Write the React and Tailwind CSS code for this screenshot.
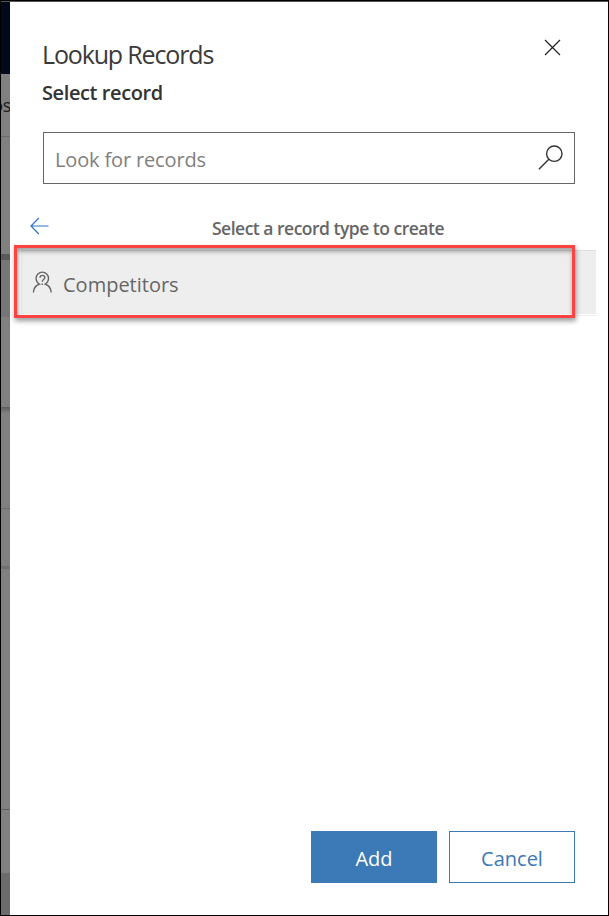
import React from "react";

function PageEdge() {
  return (
    <div className="flex w-[9px] shrink-0 flex-col overflow-hidden bg-[#808080]">
      <div className="h-[72px] shrink-0 bg-[#000a1a]" />
      <div className="flex h-[62px] shrink-0 justify-end">
        <span className="mt-[19px] -mr-[1px] text-[18px] leading-[24px] tracking-[-0.3px] text-[#1c1c1c]">os</span>
      </div>
      <div className="h-px shrink-0 bg-[#6c6c6c]" />
      <div className="h-[117px] shrink-0" />
      <div className="h-[6px] shrink-0 bg-[#5a5a5a]" />
      <div className="h-[57px] shrink-0 bg-[#767676]" />
      <div className="h-[90px] shrink-0" />
      <div className="h-[6px] shrink-0 bg-linear-to-b from-[#5e5e5e] to-[#808080]" />
      <div className="h-[95px] shrink-0" />
      <div className="h-px shrink-0 bg-[#6a6a6a]" />
      <div className="h-[57px] shrink-0" />
      <div className="h-[3px] shrink-0 bg-[#717171]" />
      <div className="h-[240px] shrink-0" />
      <div className="h-px shrink-0 bg-[#606060]" />
      <div className="h-[63px] shrink-0" />
      <div className="flex-1 bg-[#6c6c6c]" />
    </div>
  );
}

export default function App() {
  return (
    <div className="flex h-[916px] w-[609px] flex-col overflow-hidden border border-black bg-white font-['Open_Sans','Noto_Sans',sans-serif]">
      <div className="h-px shrink-0 bg-[#555555]" />
      <div className="flex min-h-0 flex-1">
        <PageEdge />
        <main className="flex min-w-0 flex-1 flex-col">
          <header className="flex h-[130px] shrink-0 justify-between pr-[47px] pl-[32px]">
            <div>
              <h1 className="mt-[35px] text-[25px] leading-[34px] font-normal tracking-[-1.15px] whitespace-nowrap text-[#3a3a3a]">Lookup Records</h1>
              <h2 className="mt-[8px] text-[20px] leading-[28px] font-semibold tracking-[-0.4px] whitespace-nowrap text-[#333333]">Select record</h2>
            </div>
            <button className="mt-[37px] h-[17px] w-[17px]" aria-label="Close">
              <svg width="17" height="17" viewBox="0 0 17 17" fill="none" stroke="#222" strokeWidth="1.2">
                <path d="M1 1L16 16M16 1L1 16" />
              </svg>
            </button>
          </header>

          <div className="ml-[33px] flex h-[52px] w-[532px] shrink-0 items-center justify-between border border-[#666666] pr-[11px] pl-[11px]">
            <span className="pt-[4px] text-[20px] leading-[28px] tracking-[-0.15px] whitespace-nowrap text-[#808080]">Look for records</span>
            <svg className="-mt-px" width="25" height="25" viewBox="0 0 25 25" fill="none" stroke="#333" strokeWidth="1.4">
              <circle cx="16.3" cy="8.7" r="7.7" />
              <path d="M10.9 14.3L.9 24.3" />
            </svg>
          </div>

          <div className="flex h-[66px] shrink-0 pl-[20px]">
            <svg className="mt-[33px] shrink-0" width="19" height="18" viewBox="0 0 19 18" fill="none" stroke="#2f75c4" strokeWidth="1.2">
              <path d="M18.5 9H1M8.8 1L1 9l7.8 8" />
            </svg>
            <h3 className="mt-[31px] ml-[163px] text-[17.5px] leading-[26px] font-semibold tracking-[-0.5px] whitespace-nowrap text-[#666666]">Select a record type to create</h3>
          </div>

          <div className="relative mr-[12px] ml-[11px] h-[66px] shrink-0 border-y border-t-[#dedede] border-b-[#eeeeee]">
            <div className="flex h-[63px] items-center bg-[#eeeeee] pl-[11px]">
              <svg className="-mt-[1px]" width="20" height="23" viewBox="-.5 0 20 23" fill="none" stroke="#666" strokeWidth="1.4">
                <path d="M.9 21.500c.3-4.200 2.400-7.200 6-8.500C4.700 11.800 3.600 9.800 3.600 7.300A6.200 6.200 0 0 1 16 7.300c0 2.500-1.100 4.500-3.300 5.700 3.600 1.300 5.700 4.300 6 8.500" />
                <path d="M7.500 6.800c0-3.300 4.800-3.200 4.800-.2 0 2-2.500 1.900-2.500 4.100M9.800 12.500v1.500" />
              </svg>
              <span className="ml-[11px] pt-[4px] text-[20px] leading-[28px] whitespace-nowrap text-[#666666]">Competitors</span>
            </div>
            <div className="absolute -top-[6px] -left-[7px] h-[73px] w-[561px] border-[3px] border-[#ff4343] shadow-[1px_3px_5px_rgba(0,0,0,0.4),inset_1px_3px_5px_rgba(0,0,0,0.4)]" />
          </div>

          <div className="flex-1" />
          <footer className="flex h-[84px] shrink-0 justify-end gap-[12px] pr-[33px]">
            <button className="h-[52px] w-[126px] bg-[#3b79b7] pt-[3px] text-[20px] text-white">Add</button>
            <button className="h-[52px] w-[126px] border border-[#3b79b7] bg-white pt-[3px] text-[20px] text-[#3b79b7]">Cancel</button>
          </footer>
        </main>
      </div>
    </div>
  );
}
